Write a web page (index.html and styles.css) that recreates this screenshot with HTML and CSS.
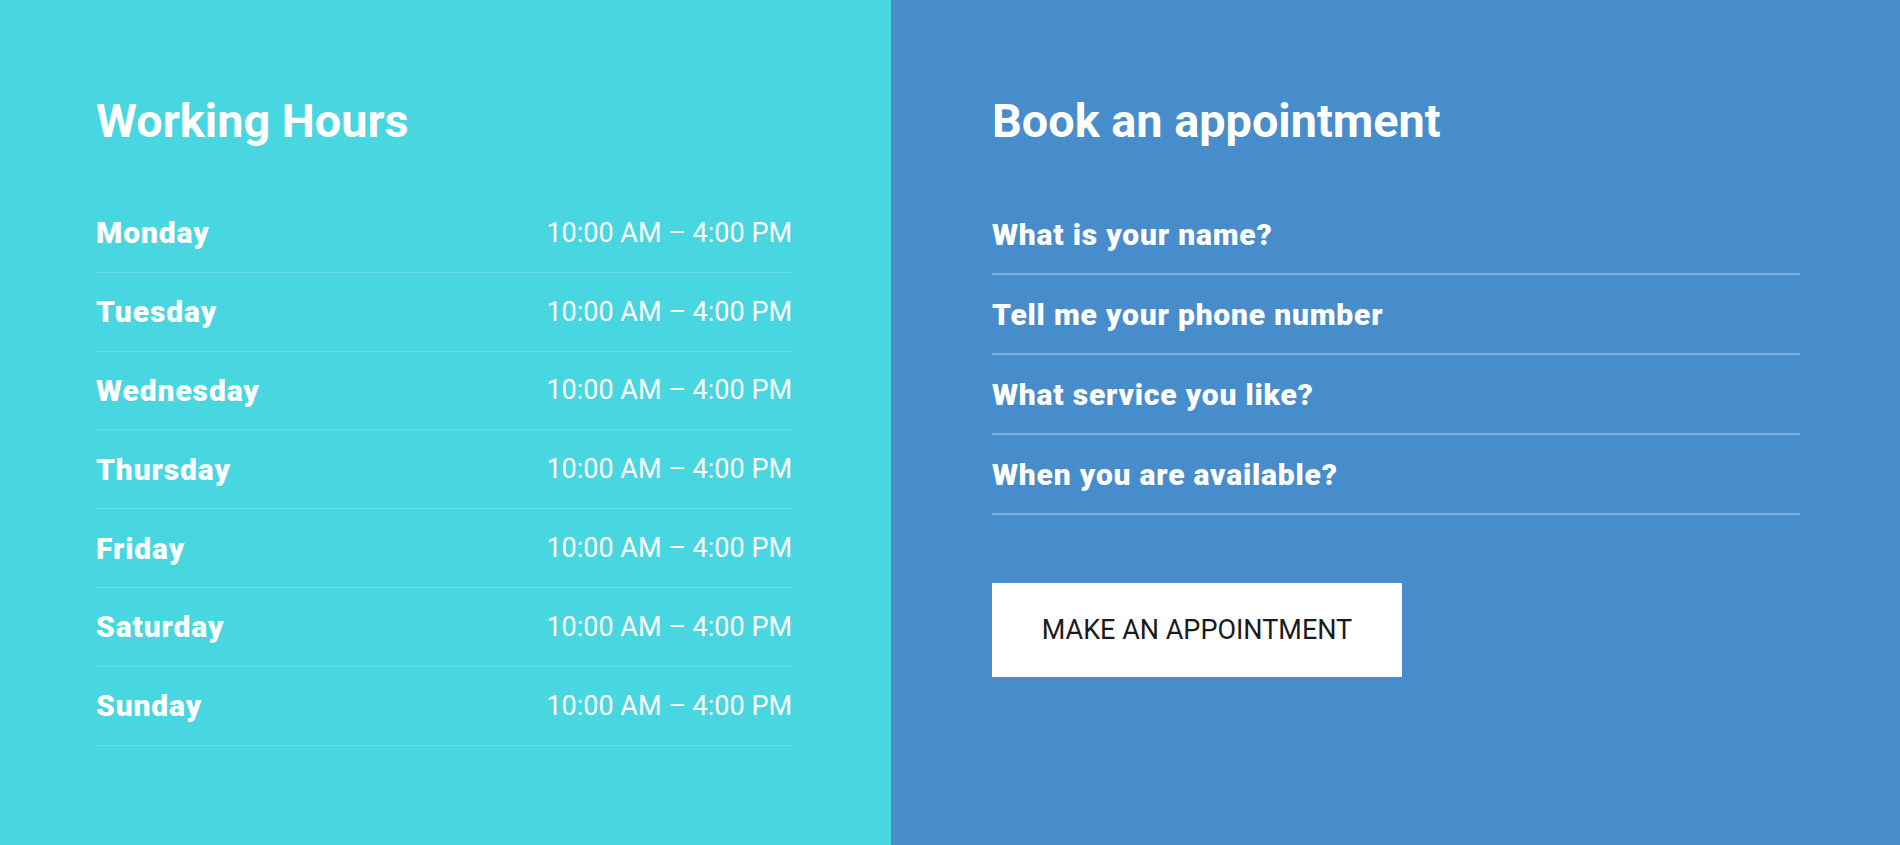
FILE: index.html
```html
<!DOCTYPE html>
<html lang="en">
<head>
<meta charset="utf-8">
<title>Working Hours</title>
<link rel="stylesheet" href="styles.css">
</head>
<body>
<main class="split">
  <section class="panel hours">
    <h2 class="title">Working Hours</h2>
    <ul class="hours-list">
      <li class="hours-row"><span class="day">Monday</span><span class="time">10:00 AM – 4:00 PM</span></li>
      <li class="hours-row"><span class="day">Tuesday</span><span class="time">10:00 AM – 4:00 PM</span></li>
      <li class="hours-row"><span class="day">Wednesday</span><span class="time">10:00 AM – 4:00 PM</span></li>
      <li class="hours-row"><span class="day">Thursday</span><span class="time">10:00 AM – 4:00 PM</span></li>
      <li class="hours-row"><span class="day">Friday</span><span class="time">10:00 AM – 4:00 PM</span></li>
      <li class="hours-row"><span class="day">Saturday</span><span class="time">10:00 AM – 4:00 PM</span></li>
      <li class="hours-row"><span class="day">Sunday</span><span class="time">10:00 AM – 4:00 PM</span></li>
    </ul>
  </section>
  <section class="panel booking">
    <h2 class="title">Book an appointment</h2>
    <form class="form">
      <div class="field">What is your name?</div>
      <div class="field">Tell me your phone number</div>
      <div class="field">What service you like?</div>
      <div class="field">When you are available?</div>
      <button type="button" class="btn">MAKE AN APPOINTMENT</button>
    </form>
  </section>
</main>
</body>
</html>
```
FILE: styles.css
```css
* { box-sizing: border-box; }
html, body { margin: 0; padding: 0; }
body {
  font-family: Roboto, "Liberation Sans", sans-serif;
  color: #fff;
  width: 1900px;
  height: 845px;
  overflow: hidden;
}
.split {
  display: flex;
  height: 845px;
}
.panel {
  padding-top: 95px;
}
.hours {
  width: 891px;
  background: #48d6e0;
  padding-left: 96px;
  padding-right: 99px;
}
.booking {
  flex: 1;
  background: #488dcb;
  padding-left: 101px;
  padding-right: 100px;
}
.title {
  margin: 0;
  font-size: 46.8px;
  line-height: 52px;
  font-weight: 700;
}
.hours-list {
  list-style: none;
  margin: 47px 0 0;
  padding: 0;
}
.hours-row {
  display: flex;
  justify-content: space-between;
  align-items: center;
  height: 78.8px;
  border-bottom: 1px solid rgba(255, 255, 255, 0.18);
}
.day {
  font-size: 30px;
  font-weight: 900;
  letter-spacing: 0.9px;
}
.time {
  font-size: 27px;
  font-weight: 400;
}
.form {
  margin-top: 48px;
  display: flex;
  flex-direction: column;
}
.field {
  height: 80px;
  display: flex;
  align-items: center;
  font-size: 30px;
  font-weight: 900;
  letter-spacing: 0.8px;
  border-bottom: 2px solid rgba(255, 255, 255, 0.3);
}
.btn {
  align-self: flex-start;
  margin-top: 68px;
  width: 410px;
  height: 94px;
  border: 0;
  background: #fff;
  color: #1b1b1b;
  font-family: Roboto, "Liberation Sans", sans-serif;
  font-size: 27px;
  font-weight: 400;
  padding: 0;
}
```
